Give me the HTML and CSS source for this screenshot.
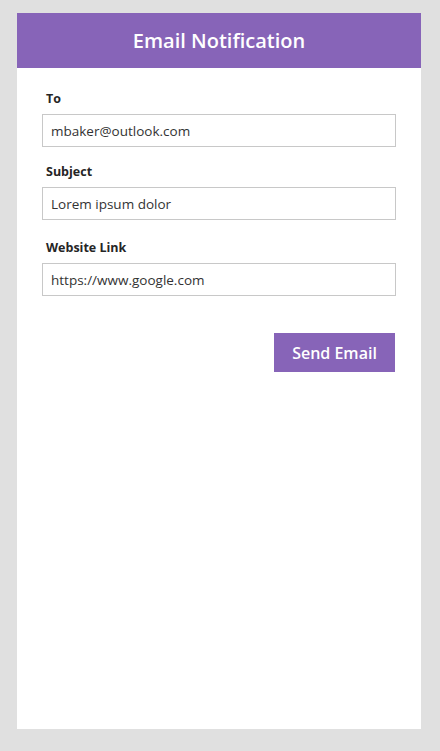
FILE: index.html
```html
<!DOCTYPE html>
<html>
<head>
<meta charset="utf-8">
<link rel="stylesheet" href="styles.css">
</head>
<body>
<div class="card">
  <div class="header">Email Notification</div>
  <div class="form">
    <div class="field">
      <div class="label">To</div>
      <div class="input">mbaker@outlook.com</div>
    </div>
    <div class="field field-wide">
      <div class="label">Subject</div>
      <div class="input">Lorem ipsum dolor</div>
    </div>
    <div class="field">
      <div class="label">Website Link</div>
      <div class="input">https://www.google.com</div>
    </div>
    <div class="actions">
      <div class="button">Send Email</div>
    </div>
  </div>
</div>
</body>
</html>
```
FILE: styles.css
```css
html, body {
  margin: 0;
  padding: 0;
}
body {
  background: #e0e0e0;
  font-family: "Open Sans", "Noto Sans", sans-serif;
  padding: 13px 19px 22px 17px;
}
.card {
  background: #ffffff;
  width: 404px;
  height: 716px;
  display: flex;
  flex-direction: column;
}
.header {
  background: #8764b8;
  color: #ffffff;
  height: 55px;
  display: flex;
  align-items: center;
  justify-content: center;
  font-size: 20px;
  font-weight: 600;
}
.form {
  padding: 20px 25px 0 25px;
  display: flex;
  flex-direction: column;
}
.field {
  display: flex;
  flex-direction: column;
  margin-bottom: 14px;
}
.field-wide {
  margin-bottom: 17px;
}
.label {
  font-size: 12.5px;
  font-weight: 700;
  color: #252525;
  line-height: 18px;
  padding-left: 4px;
  padding-top: 2px;
  margin-bottom: 6px;
}
.input {
  height: 31px;
  border: 1px solid #c8c8c8;
  box-sizing: content-box;
  display: flex;
  align-items: center;
  padding-left: 8px;
  font-size: 13.5px;
  color: #333333;
}
.actions {
  display: flex;
  justify-content: flex-end;
  margin-top: 23px;
  padding-right: 1px;
}
.button {
  width: 121px;
  height: 39px;
  background: #8764b8;
  color: #ffffff;
  display: flex;
  align-items: center;
  justify-content: center;
  font-size: 16px;
  font-weight: 600;
}
```
